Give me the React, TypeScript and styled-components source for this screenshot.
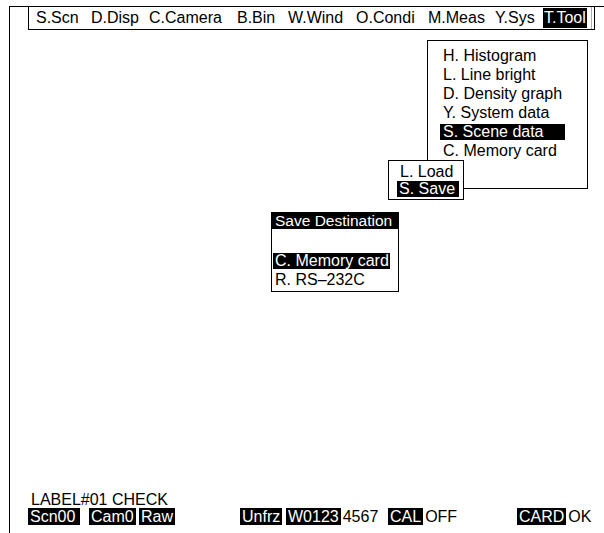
import React from 'react';
import styled, { createGlobalStyle } from 'styled-components';

const GlobalStyle = createGlobalStyle`
  html, body { margin: 0; padding: 0; background: #fff; }
  body { font-family: 'Liberation Sans', Arial, Helvetica, sans-serif; color: #000; }
`;

const Screen = styled.div`
  position: relative;
  width: 604px;
  height: 533px;
  overflow: hidden;
  background: #fff;
  font-size: 16px;
`;

const Frame = styled.div`
  display: flex;
  flex-direction: column;
  box-sizing: border-box;
  margin: 6px 0 0 9px;
  height: 527px;
  border-top: 1px solid #000;
  border-left: 1px solid #000;
`;

const MenuBar = styled.div`
  display: flex;
  align-items: center;
  box-sizing: border-box;
  margin: -1px 0 0 18px;
  width: 567px;
  height: 24px;
  padding-left: 7px;
  border: 1px solid #000;
  box-shadow: inset -2px 0 0 #fff, inset -3px 0 0 #aaa;
`;

const MenuItem = styled.span<{ $w?: number; $active?: boolean }>`
  flex: none;
  width: ${(p) => (p.$w ? `${p.$w}px` : 'auto')};
  line-height: 20px;
  white-space: nowrap;
  ${(p) => p.$active && 'background: #000; color: #fff; padding: 0 1px;'}
`;

const Spacer = styled.div`
  flex: 1;
`;

const Status = styled.div`
  padding-bottom: 8px;
`;

const StatusTitle = styled.div`
  padding-left: 21px;
  line-height: 17px;
  white-space: nowrap;
`;

const StatusRow = styled.div`
  display: flex;
  padding-left: 18px;
  line-height: 17px;
  white-space: nowrap;
`;

const Cell = styled.div<{ $w?: number }>`
  flex: none;
  display: flex;
  gap: 2px;
  width: ${(p) => (p.$w ? `${p.$w}px` : 'auto')};
`;

const Tag = styled.span<{ $pr?: number }>`
  background: #000;
  color: #fff;
  padding: 0 ${(p) => p.$pr ?? 2}px 0 2px;
`;

const Popup = styled.div<{ $x: number; $y: number; $w: number; $h: number }>`
  position: absolute;
  left: ${(p) => p.$x}px;
  top: ${(p) => p.$y}px;
  width: ${(p) => p.$w}px;
  height: ${(p) => p.$h}px;
  box-sizing: border-box;
  border: 1px solid #000;
  background: #fff;
`;

const ToolList = styled.div`
  padding: 5px 0 0 12px;
`;

const LoadList = styled.div`
  padding: 2px 0 0 8px;
`;

const Row = styled.div<{ $h: number }>`
  display: flex;
  align-items: center;
  height: ${(p) => p.$h}px;
  white-space: nowrap;
`;

const Label = styled.span<{ $hl?: boolean; $w: number; $pad: number }>`
  display: inline-block;
  box-sizing: border-box;
  padding-left: ${(p) => p.$pad}px;
  line-height: 16px;
  ${(p) => p.$hl && `width: ${p.$w}px; background: #000; color: #fff;`}
`;

const DestTitle = styled.div`
  height: 16px;
  line-height: 16px;
  padding-left: 3px;
  margin-bottom: 22px;
  font-size: 15.5px;
  background: #000;
  color: #fff;
  white-space: nowrap;
  overflow: hidden;
`;

const DestList = styled.div`
  padding-left: 1px;
`;

const menu = [
  { t: 'S.Scn', w: 55 },
  { t: 'D.Disp', w: 58 },
  { t: 'C.Camera', w: 88 },
  { t: 'B.Bin', w: 51 },
  { t: 'W.Wind', w: 68 },
  { t: 'O.Condi', w: 72 },
  { t: 'M.Meas', w: 67 },
  { t: 'Y.Sys', w: 48 },
];

const tools = ['H. Histogram', 'L. Line bright', 'D. Density graph', 'Y. System data', 'S. Scene data', 'C. Memory card'];

export default function App() {
  return (
    <Screen>
      <GlobalStyle />
      <Frame>
        <MenuBar>
          {menu.map((m) => (
            <MenuItem key={m.t} $w={m.w}>
              {m.t}
            </MenuItem>
          ))}
          <MenuItem $active>T.Tool</MenuItem>
        </MenuBar>
        <Spacer />
        <Status>
          <StatusTitle>LABEL#01 CHECK</StatusTitle>
          <StatusRow>
            <Cell $w={61}>
              <Tag $pr={5}>Scn00</Tag>
            </Cell>
            <Cell $w={50}>
              <Tag>Cam0</Tag>
            </Cell>
            <Cell $w={101}>
              <Tag>Raw</Tag>
            </Cell>
            <Cell $w={46}>
              <Tag>Unfrz</Tag>
            </Cell>
            <Cell $w={102}>
              <Tag>W0123</Tag>
              <span>4567</span>
            </Cell>
            <Cell $w={129}>
              <Tag>CAL</Tag>
              <span>OFF</span>
            </Cell>
            <Cell>
              <Tag>CARD</Tag>
              <span>OK</span>
            </Cell>
          </StatusRow>
        </Status>
      </Frame>

      <Popup $x={427} $y={40} $w={161} $h={149}>
        <ToolList>
          {tools.map((t) => (
            <Row key={t} $h={19}>
              <Label $hl={t.startsWith('S.')} $w={125} $pad={3}>
                {t}
              </Label>
            </Row>
          ))}
        </ToolList>
      </Popup>

      <Popup $x={388} $y={160} $w={76} $h={40}>
        <LoadList>
          <Row $h={17}>
            <Label $w={62} $pad={3}>L. Load</Label>
          </Row>
          <Row $h={17}>
            <Label $hl $w={62} $pad={2}>S. Save</Label>
          </Row>
        </LoadList>
      </Popup>

      <Popup $x={271} $y={212} $w={128} $h={80}>
        <DestTitle>Save Destination</DestTitle>
        <DestList>
          <Row $h={19}>
            <Label $hl $w={117} $pad={2}>C. Memory card</Label>
          </Row>
          <Row $h={19}>
            <Label $w={117} $pad={2}>R. RS–232C</Label>
          </Row>
        </DestList>
      </Popup>
    </Screen>
  );
}
